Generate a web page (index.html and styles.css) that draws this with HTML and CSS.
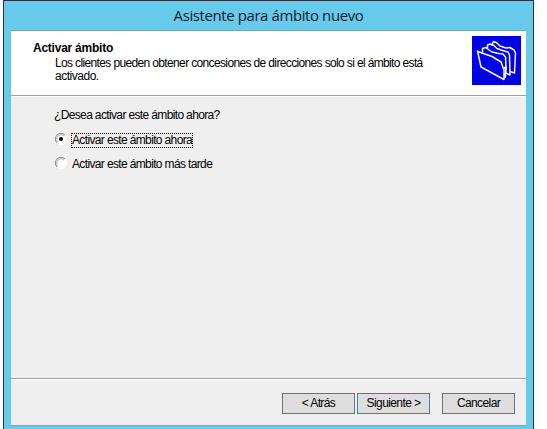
FILE: index.html
```html
<!DOCTYPE html>
<html lang="es">
<head>
<meta charset="utf-8">
<title>Asistente para ámbito nuevo</title>
<link rel="stylesheet" href="styles.css">
</head>
<body>
<main class="window">
  <h1 class="titlebar"><span>Asistente para ámbito nuevo</span></h1>
  <div class="client">
    <header class="header">
      <div class="heading">
        <h2>Activar ámbito</h2>
        <p><span class="line1">Los clientes pueden obtener concesiones de direcciones solo si el ámbito está</span><br><span class="line2">activado.</span></p>
      </div>
      <svg class="folders" width="49" height="49" viewBox="0 0 49 49">
        <defs><pattern id="dots" width="2" height="2" patternUnits="userSpaceOnUse"><rect width="2" height="2" fill="#0000ff"/><rect width="1" height="1" fill="#0000a0" shape-rendering="crispEdges"/></pattern></defs>
        <rect width="49" height="49" fill="#0000ff"/>
        <rect width="49" height="49" fill="url(#dots)" opacity=".6"/>
        <g fill="none" stroke="#f4f4f4" stroke-width="1.5" stroke-linejoin="round">
          <path d="M19.500 9.500L21.500 5.500L25 7L28 10L34 12L38 11.500L42 14L43.500 17L42.500 37L38 35.500"/>
          <path d="M15.500 12.500V9L18 8L22 9.500L25 12.500L32 15L36 16L37.500 19L38 39L34 37"/>
          <path d="M10.500 16.500V12.500L14 11.500L17 14L20 16L27 17.500L31 18L33.500 21L34 32"/>
          <path d="M5.500 15L9 31L32 43.500V34L29 26L20 20.500L7 16Z"/>
          <path d="M32 32L34 31.500L33 42" stroke-width="2"/>
        </g>
      </svg>
    </header>
    <section class="body">
      <p class="question"><span>¿Desea activar este ámbito ahora?</span></p>
      <div class="option selected">
        <svg width="12" height="12" viewBox="0 0 12 12"><circle cx="6" cy="6" r="5" fill="#fff"/><path d="M2 10A5.500 5.500 0 0 1 10 2" fill="none" stroke="#888"/><path d="M3 9A4.200 4.200 0 0 1 9 3" fill="none" stroke="#777" stroke-width=".6"/><path d="M10 2A5.500 5.500 0 0 1 2 10" fill="none" stroke="#fff"/><circle cx="6" cy="6" r="2" fill="#000"/></svg>
        <span class="label">Activar este ámbito ahora</span>
      </div>
      <div class="option">
        <svg width="12" height="12" viewBox="0 0 12 12"><circle cx="6" cy="6" r="5" fill="#fff"/><path d="M2 10A5.500 5.500 0 0 1 10 2" fill="none" stroke="#888"/><path d="M3 9A4.200 4.200 0 0 1 9 3" fill="none" stroke="#777" stroke-width=".6"/><path d="M10 2A5.500 5.500 0 0 1 2 10" fill="none" stroke="#fff"/></svg>
        <span class="label">Activar este ámbito más tarde</span>
      </div>
    </section>
    <footer class="footer">
      <button class="back">&lt; Atrás</button>
      <button class="next">Siguiente &gt;</button>
      <button class="cancel">Cancelar</button>
    </footer>
  </div>
</main>
</body>
</html>
```
FILE: styles.css
```css
* { box-sizing: border-box; }
body { margin: 0; background: #fff; font: 12px/13px "Liberation Sans", Arial, sans-serif; color: #000; letter-spacing: -0.64px; }
h1, h2, p { margin: 0; }
.window { width: 531px; height: 429px; margin-left: 3px; padding: 0 7px 3px; background: #67caea; border: 1px solid #2b3139; border-bottom: 0; overflow: hidden; }
.titlebar { height: 30px; padding-top: 4px; text-align: center; font: 15px/20px "Open Sans", "Noto Sans", sans-serif; letter-spacing: -0.41px; color: #14212a; border-bottom: 1px solid #72a9bf; }
.client { width: 515px; height: 395px; display: flex; flex-direction: column; background: #efefef; border-bottom: 1px solid #72a9bf; }
.header { height: 66px; display: flex; justify-content: space-between; padding: 5px 5px 0 22px; background: #fff; border-bottom: 1px solid #fff; box-shadow: inset 0 -1px #a0a0a0; }
.heading { padding-top: 5px; white-space: nowrap; }
h2 { font-size: 12px; line-height: 14px; letter-spacing: -0.24px; }
.heading p { padding: 2px 0 0 22px; }
.line2 { letter-spacing: -0.48px; }
.folders { flex: none; }
.body { flex: 1; padding: 12px 0 0 43px; }
.question { height: 24px; }
.option { height: 24px; display: flex; align-items: flex-start; }
.option svg { flex: none; margin: 0 4px 0 1px; }
.label { padding: 1px; line-height: 13px; white-space: nowrap; }
.selected .label { outline: 1px dotted #000; outline-offset: -1px; }
.footer { height: 47px; display: flex; align-items: flex-start; padding: 14px 11px 0 0; justify-content: flex-end; border-top: 1px solid #a0a0a0; box-shadow: inset 0 1px #fff; }
button { width: 73px; height: 21px; padding: 0; font: inherit; letter-spacing: -0.6px; color: #000; background: #dedede; border: 1px solid #707070; border-radius: 0; }
.next { margin: 0 12px 0 2px; border-color: #417ba5; }
```
